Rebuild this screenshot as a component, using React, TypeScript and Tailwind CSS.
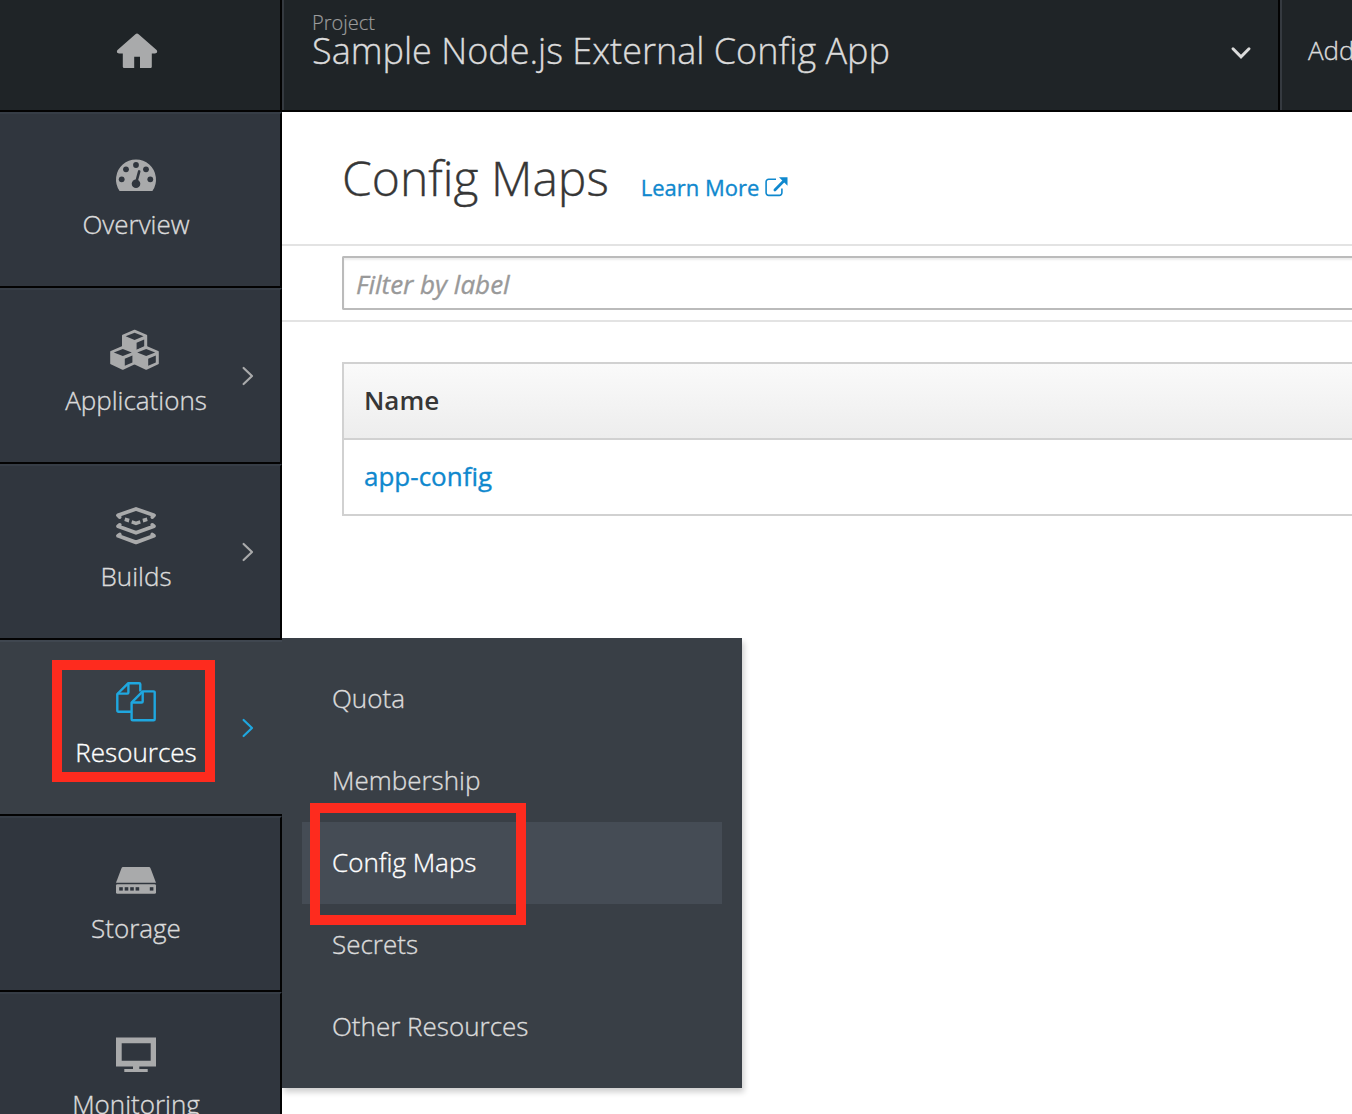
import type { ReactNode } from 'react';

type NavItem = { label: string; icon: ReactNode; viewBox: string; chevron?: boolean; active?: boolean };

const HOLE = '#30363e';

function Cube({ dx, dy }: { dx: number; dy: number }) {
  return (
    <g transform={`translate(${dx} ${dy})`}>
      <path
        fill="#a9aaab"
        stroke="#a9aaab"
        strokeWidth="2"
        strokeLinejoin="round"
        d="M0 1 11.6 6V17.600L0 23-11.6 17.600V6Z"
      />
      <path fill={HOLE} d="M0 3.1 9 6.6 0 10.2-9 6.6ZM2 13 9.6 9.7V16.6L2 20Z" />
    </g>
  );
}

const nav: NavItem[] = [
  {
    label: 'Overview',
    viewBox: '104 148 64 56',
    icon: (
      <>
        <path fill="#a9aaab" d="M119.6 191a20 20 0 1 1 32.8 0Z" />
        <g fill={HOLE}>
          <circle cx="121.7" cy="179.3" r="2.9" />
          <circle cx="126" cy="169.3" r="2.9" />
          <circle cx="136" cy="165" r="2.9" />
          <circle cx="146" cy="169.3" r="2.9" />
          <circle cx="150.3" cy="179.3" r="2.9" />
          <circle cx="136" cy="183.7" r="4.3" />
        </g>
        <path stroke={HOLE} strokeWidth="2.6" strokeLinecap="round" d="m136.6 181 2.6-9.6" />
      </>
    ),
  },
  {
    label: 'Applications',
    viewBox: '104 324 64 56',
    chevron: true,
    icon: (
      <>
        <Cube dx={134.6} dy={329.7} />
        <Cube dx={122.8} dy={345.8} />
        <Cube dx={146.2} dy={345.8} />
      </>
    ),
  },
  {
    label: 'Builds',
    viewBox: '104 500 64 56',
    chevron: true,
    icon: (
      <>
        <g fill="none" stroke="#a9aaab" strokeWidth="3.8" strokeLinejoin="round" strokeLinecap="round">
          <path d="M119.600 517 118 515.300 136 509 154 515.300 152.400 517" />
          <path d="M119.800 524.900 118 526.200 136 532.800 154 526.200 152.200 524.900" />
          <path d="M119.800 534.500 118 535.800 136 542.400 154 535.800 152.200 534.500" />
        </g>
        <path
          fill="#a9aaab"
          d="M125.200 517.400 129.600 518.800 128.700 522.600 124.300 521.100ZM146.800 517.400 142.400 518.800 143.300 522.600 147.700 521.100ZM132.200 520.200 136 521.500 139.800 520.200 140.800 523.500 136 525.200 131.200 523.500Z"
        />
      </>
    ),
  },
  {
    label: 'Resources',
    viewBox: '104 676 64 56',
    chevron: true,
    active: true,
    icon: (
      <g fill="none" stroke="#1fa7df" strokeWidth="2.4" strokeLinejoin="round">
        <path d="M131.2 711.7H118.4a1.1 1.1 0 0 1-1.1-1.1V694l11-10.8H139.2a1.1 1.1 0 0 1 1.1 1.1V691.5" />
        <path d="M128.4 683.4V692.5a1.1 1.1 0 0 1-1.1 1.1H117.6" />
        <path d="M142.7 691.4H153.6a1.1 1.1 0 0 1 1.1 1.1V719.2a1.1 1.1 0 0 1-1.1 1.1H132.7a1.1 1.1 0 0 1-1.1-1.1V702.6Z" />
        <path d="M142.7 691.6V701.4a1.1 1.1 0 0 1-1.1 1.1H131.8" />
      </g>
    ),
  },
  {
    label: 'Storage',
    viewBox: '104 852 64 56',
    icon: (
      <>
        <path fill="#a9aaab" d="M123 867h26q1 0 1.4 1l5.6 14.8H116l5.600-14.800q.4-1 1.400-1Z" />
        <rect x="116" y="884.2" width="40" height="9.6" rx="1.4" fill="#a9aaab" />
        <g fill={HOLE}>
          <rect x="119.2" y="887.2" width="3.6" height="3.4" />
          <rect x="124.7" y="887.2" width="3.6" height="3.4" />
          <rect x="130.2" y="887.2" width="3.6" height="3.4" />
          <rect x="135.6" y="887.2" width="3.6" height="3.4" />
          <rect x="149.8" y="887.2" width="3.6" height="3.4" />
        </g>
      </>
    ),
  },
  {
    label: 'Monitoring',
    viewBox: '104 1028 64 56',
    icon: (
      <path
        fill="#a9aaab"
        fillRule="evenodd"
        d="M116 1037.500h40v29H139.300v2.600h8.400v2.900H124.300v-2.900h8.700v-2.600H116ZM121.700 1043.300v17.400h29v-17.400Z"
      />
    ),
  },
];

const submenu = ['Quota', 'Membership', 'Config Maps', 'Secrets', 'Other Resources'];

function SidebarItem({ item }: { item: NavItem }) {
  return (
    <li
      className={
        item.active
          ? 'relative flex h-44 flex-col items-center border-t-2 border-b-2 border-t-[#404750] border-b-[#030303] bg-[#393f46] pt-[34px] pr-2.5'
          : 'relative flex h-44 flex-col items-center border-t-2 border-r-2 border-b-2 border-t-[#363d46] border-r-[#030303] border-b-[#030303] bg-[#30363e] pt-[34px] pr-2'
      }
    >
      <svg className="h-14 w-16 shrink-0" viewBox={item.viewBox}>
        {item.icon}
      </svg>
      <span className={item.active ? 'mt-0.5 text-[26px] leading-9 text-white' : 'mt-0.5 text-[26px] leading-9 text-[#dbdbdb]'}>
        {item.label}
      </span>
      {item.chevron && (
        <svg className="absolute top-[75px] left-[240px] h-6 w-4" viewBox="0 0 16 24" fill="none">
          <path
            d="m3.600 3 8.400 8 -8.400 8"
            stroke={item.active ? '#1fa7df' : '#a9aaab'}
            strokeWidth="2.200"
            strokeLinecap="round"
            strokeLinejoin="round"
          />
        </svg>
      )}
    </li>
  );
}

export default function App() {
  return (
    <div className="relative flex h-[1114px] w-[1352px] flex-col overflow-hidden bg-white font-['Open_Sans',sans-serif] font-light antialiased [-webkit-text-stroke:0.35px]">
      <header className="flex h-28 shrink-0 border-b-2 border-[#030303] bg-[#1f2427] text-[#dbdbdb]">
        <div className="w-[282px] shrink-0 border-r-2 border-[#030303]">
          <svg className="mt-7 ml-[113px] h-12 w-12" viewBox="113 28 48 48">
            <path
              fill="#a9aaab"
              d="M135.400 34.200q1.600-1.400 3.200 0l17.700 15.600c1.600 1.500.9 3.700-1.300 3.700h-3.200v13.200q0 1.300-1.300 1.300H140V56.700h-5.800V68H124.200q-1.400 0-1.400-1.300V53.500h-3.700c-2.200 0-2.900-2.200-1.300-3.700Z"
            />
          </svg>
        </div>
        <div className="flex w-[998px] shrink-0 justify-between border-r-2 border-l-2 border-r-[#030303] border-l-[#353a40] pt-3.5 pr-[25px] pl-7">
          <div>
            <div className="text-xl leading-[18px] text-[#9c9c9c] [-webkit-text-stroke:0.2px]">Project</div>
            <div className="text-4xl leading-[38px] whitespace-nowrap">Sample Node.js External Config App</div>
          </div>
          <svg className="mt-[30px] h-4 w-6" viewBox="1229 44 24 16" fill="none">
            <path d="m1233 48.800 8 8 8-8" stroke="#dbdbdb" strokeWidth="3" strokeLinecap="round" />
          </svg>
        </div>
        <div className="grow border-l-2 border-[#353a40] pt-8 pl-[26px] text-[26px] leading-9 whitespace-nowrap">Add to project</div>
      </header>

      <div className="flex grow">
        <nav className="w-[282px] shrink-0">
          <ul>
            {nav.map((item) => (
              <SidebarItem key={item.label} item={item} />
            ))}
          </ul>
        </nav>

        <main className="min-w-0 grow text-[#363636]">
          <div className="flex h-[134px] items-baseline gap-8 border-b-2 border-[#e3e3e3] pt-[34px] pl-[60px]">
            <h1 className="text-5xl leading-[64px]">Config Maps</h1>
            <a className="flex items-center gap-1.5 text-[22px] leading-8 font-normal text-[#0f88ce]">
              Learn More
              <svg className="h-6 w-6" viewBox="765.500 175 24 24" fill="none">
                <path
                  d="M776.500 179.200h-7.300a2.600 2.600 0 0 0-2.600 2.600v11a2.600 2.600 0 0 0 2.600 2.600h10.600a2.600 2.600 0 0 0 2.600-2.600v-4.300"
                  stroke="#0f88ce"
                  strokeWidth="1.600"
                />
                <path d="m775.400 190 8.600-8.700" stroke="#0f88ce" strokeWidth="2.700" strokeLinecap="round" />
                <path d="M779.500 177.200h8.500v8.500Z" fill="#0f88ce" />
              </svg>
            </a>
          </div>
          <div className="h-[76px] overflow-hidden border-b-2 border-[#e3e3e3] pt-2.5 pl-[60px]">
            <div className="-mr-1 h-[54px] rounded-l-[2px] border-2 border-r-0 border-[#bbbbbb] pt-2 pl-3 text-[26px] leading-9 font-normal text-[#999999] italic shadow-[inset_0_2px_2px_rgba(3,3,3,0.075)]">
              Filter by label
            </div>
          </div>
          <div className="mt-10 ml-[60px] border-2 border-r-0 border-[#d1d1d1] text-[26px] leading-9">
            <div className="h-[76px] border-b-2 border-[#d1d1d1] bg-linear-to-b from-[#fafafa] to-[#ededed] pt-[18px] pl-5 font-semibold [-webkit-text-stroke:0px]">
              Name
            </div>
            <div className="h-[74px] pt-[18px] pl-5 font-normal text-[#0f88ce]">app-config</div>
          </div>
        </main>
      </div>

      <ul className="absolute top-[638px] left-[282px] h-[450px] w-[460px] bg-[#393f46] p-5 text-[26px] leading-9 text-[#dbdbdb] shadow-[2px_4px_6px_rgba(3,3,3,0.2)] [clip-path:inset(0_-12px_-12px_0)]">
        {submenu.map((label) => (
          <li
            key={label}
            className={
              label === 'Config Maps' ? 'h-[82px] bg-[#454c55] pt-[22px] pl-[30px] text-white' : 'h-[82px] pt-[22px] pl-[30px]'
            }
          >
            {label}
          </li>
        ))}
      </ul>

      <div className="absolute top-[660px] left-[52px] h-[122px] w-[163px] border-10 border-[#fe2b1e]" />
      <div className="absolute top-[803px] left-[310px] h-[122px] w-[216px] border-10 border-[#fe2b1e]" />
    </div>
  );
}
